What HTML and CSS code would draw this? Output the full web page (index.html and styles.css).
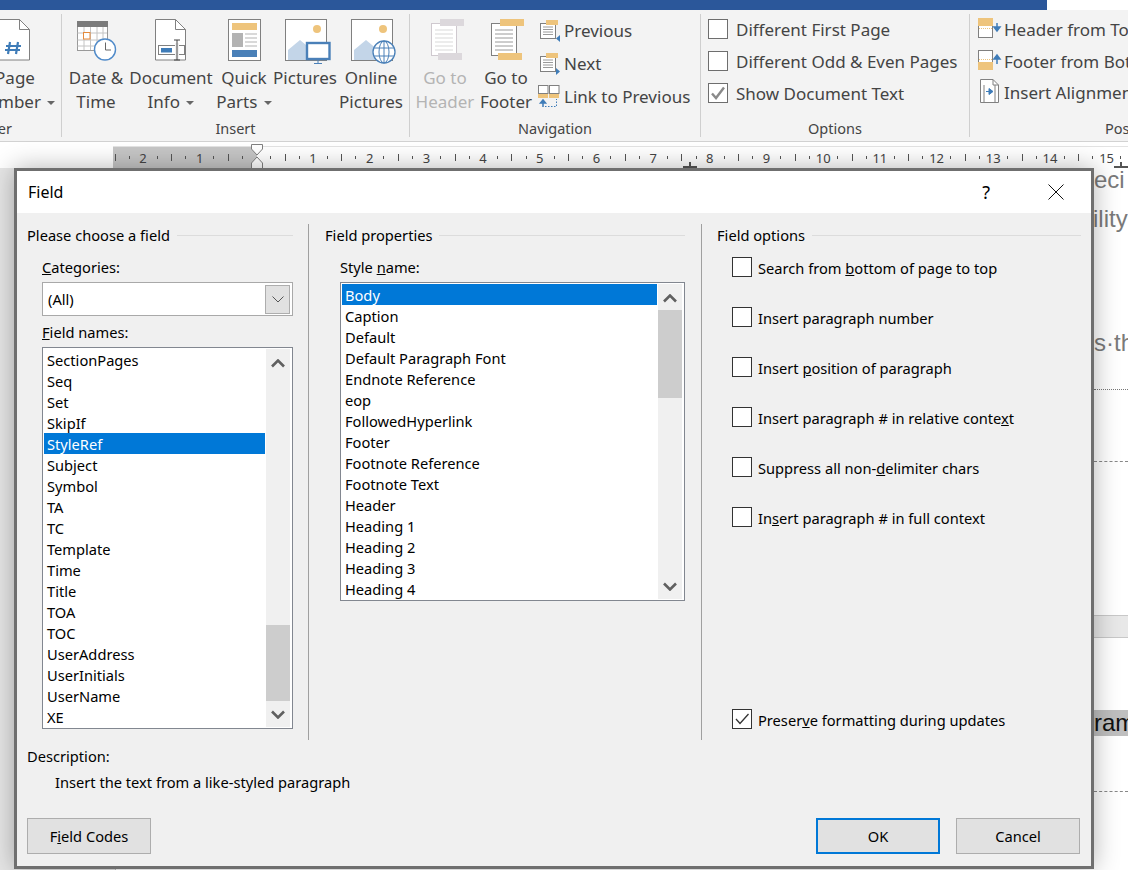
FILE: index.html
```html
<!DOCTYPE html>
<html lang="en">

<head>
    <meta charset="UTF-8">
    <meta name="viewport" content="width=device-width, initial-scale=1.0">
    <title>Field</title>
    <link rel="stylesheet" href="styles.css">
</head>

<body>
    <div class="titlebar"></div>

    <div class="ribbon">
        <div class="group group-first">
            <div class="group-body">
                <div class="big-btn btn-page">
                    <svg width="32" height="42" viewBox="0 0 32 42"><path d="M.5.5H20.5L30.5 10.5V41H.5Z" fill="#fff" stroke="#808080"/><path d="M20.5.5V10.5H30.5" fill="none" stroke="#808080"/><path d="M11 23 9 35M19 23 17 35M7 27H22M6 31H21" stroke="#3f7cb8" stroke-width="2.2" fill="none"/></svg>
                    <span class="big-label">Page<br>Number <i class="caret"></i></span>
                </div>
            </div>
            <div class="group-label">Header &amp; Footer</div>
        </div>

        <div class="group group-insert">
            <div class="group-body">
                <div class="big-btn btn-date">
                    <svg width="40" height="42" viewBox="0 0 40 42"><rect x=".5" y="1.500" width="30" height="29" fill="#fff" stroke="#999"/><rect y="1" width="31" height="6" fill="#7b7b7b"/><path d="M.5 13H30M.5 20H30M.5 26H30M7 7V30M13.500 7V30M20 7V30M26 7V30" stroke="#c4c4c4" fill="none"/><rect x="6.500" y="12.500" width="6.500" height="6.500" fill="#fff" stroke="#e58a3c"/><circle cx="28" cy="29.500" r="10.500" fill="#fff" stroke="#4f8ac9" stroke-width="1.400"/><path d="M28.500 22.500V30H34" fill="none" stroke="#666"/></svg>
                    <span class="big-label">Date &amp;<br>Time</span>
                </div>
                <div class="big-btn btn-info">
                    <svg width="32" height="42" viewBox="0 0 32 42"><path d="M.5.5H20.500L30.500 10.500V41H.5Z" fill="#fff" stroke="#808080"/><path d="M20.500.5V10.500H30.500" fill="none" stroke="#808080"/><rect x="3.500" y="26.500" width="26" height="9" fill="#fff" stroke="#808080"/><rect x="6" y="29" width="11" height="4.500" fill="#3f7cb8"/><rect x="20" y="24" width="4" height="16" fill="#f2f2f2"/><path d="M19 21H25M22 21V41M19 41H25" fill="none" stroke="#444"/></svg>
                    <span class="big-label">Document<br>Info <i class="caret"></i></span>
                </div>
                <div class="big-btn btn-parts">
                    <svg width="33" height="42" viewBox="0 0 33 42"><rect x=".5" y=".5" width="32" height="41" fill="#fff" stroke="#808080"/><rect x="4" y="4" width="25" height="7" fill="#eec47c"/><rect x="4" y="14" width="11" height="14" fill="#b3b3b3"/><path d="M17 15H29M17 19H29M17 23H29M17 27H29" stroke="#b3b3b3"/><rect x="4" y="31" width="25" height="7" fill="#4a80b8"/></svg>
                    <span class="big-label">Quick<br>Parts <i class="caret"></i></span>
                </div>
                <div class="big-btn btn-pics">
                    <svg width="46" height="46" viewBox="0 0 46 46"><rect x=".5" y=".5" width="41" height="41" fill="#fff" stroke="#808080"/><circle cx="32" cy="10" r="4" fill="#eec47c"/><path d="M3 41V31L15 21 27 31V41Z" fill="#c3d5e8"/><rect x="22" y="24" width="22.500" height="16" fill="#fff" stroke="#4a80b8" stroke-width="2.400"/><path d="M33 41V44M29 44.500H37" stroke="#4a80b8"/></svg>
                    <span class="big-label">Pictures</span>
                </div>
                <div class="big-btn btn-online">
                    <svg width="46" height="46" viewBox="0 0 46 46"><rect x=".5" y=".5" width="41" height="41" fill="#fff" stroke="#808080"/><circle cx="32" cy="10" r="4" fill="#eec47c"/><path d="M3 41V31L15 21 27 31V41Z" fill="#c3d5e8"/><circle cx="33" cy="33" r="11" fill="#fff" stroke="#4a80b8" stroke-width="1.300"/><ellipse cx="33" cy="33" rx="5" ry="11" fill="none" stroke="#4a80b8"/><path d="M33 22V44M23 29H43M23 37H43" stroke="#4a80b8"/></svg>
                    <span class="big-label">Online<br>Pictures</span>
                </div>
            </div>
            <div class="group-label">Insert</div>
        </div>

        <div class="group group-nav">
            <div class="group-body">
                <div class="big-btn btn-gohead disabled">
                    <svg width="34" height="42" viewBox="0 0 34 42"><rect x=".5" y="4.500" width="25" height="32" fill="#fff" stroke="#cfc9cf"/><rect x="9" y="0" width="24" height="7" fill="#dcd8dc"/><rect x="7" y="34" width="24" height="7" fill="#dcd8dc"/><path d="M4 11H22M4 15H22M4 19H22M4 23H22M4 27H22M4 31H22" stroke="#d9d9d9"/></svg>
                    <span class="big-label">Go to<br>Header</span>
                </div>
                <div class="big-btn btn-gofoot">
                    <svg width="34" height="42" viewBox="0 0 34 42"><rect x=".5" y="4.500" width="25" height="32" fill="#fff" stroke="#808080"/><rect x="9" y="0" width="24" height="7" fill="#eec47c"/><rect x="7" y="34" width="24" height="7" fill="#eec47c"/><rect x="4" y="8" width="18" height="24" fill="#fff"/><path d="M4 11H22M4 15H22M4 19H22M4 23H22M4 27H22M4 31H22" stroke="#9a9a9a"/></svg>
                    <span class="big-label">Go to<br>Footer</span>
                </div>
                <div class="small-col nav-col">
                    <div class="small-row">
                        <svg width="24" height="24" viewBox="0 0 24 24"><rect x="2.500" y="4.500" width="15" height="15" fill="#fff" stroke="#808080"/><rect x="8" y="1" width="12" height="5" fill="#eec47c"/><path d="M5 8H15M5 10.500H15M5 13H15M5 15.500H15" stroke="#9a9a9a"/><path d="M22 16V23L18 19.500Z" fill="#3f7cb8"/></svg>
                        <span>Previous</span>
                    </div>
                    <div class="small-row">
                        <svg width="24" height="24" viewBox="0 0 24 24"><rect x="2.500" y="4.500" width="15" height="15" fill="#fff" stroke="#808080"/><rect x="8" y="1" width="12" height="5" fill="#eec47c"/><path d="M5 8H15M5 10.500H15M5 13H15M5 15.500H15" stroke="#9a9a9a"/><path d="M18 16V23L22 19.500Z" fill="#3f7cb8"/></svg>
                        <span>Next</span>
                    </div>
                    <div class="small-row">
                        <svg width="24" height="24" viewBox="0 0 24 24"><rect x=".5" y=".5" width="9.500" height="8" fill="#fff" stroke="#808080"/><rect x="11.500" y=".5" width="9.500" height="8" fill="#fff" stroke="#808080"/><rect y="9" width="10" height="4" fill="#eec47c"/><rect x="11" y="9" width="10" height="4" fill="#eec47c"/><path d="M7 21.500H18.500V14" fill="none" stroke="#3f7cb8" stroke-dasharray="1.500 1.500"/><path d="M5 22V16M2.500 18 5 15 7.500 18Z" fill="#3f7cb8" stroke="#3f7cb8" stroke-width="1.500"/></svg>
                        <span>Link to Previous</span>
                    </div>
                </div>
            </div>
            <div class="group-label">Navigation</div>
        </div>

        <div class="group group-options">
            <div class="group-body">
                <div class="small-col opt-col">
                    <div class="small-row"><i class="rib-box"></i><span>Different First Page</span></div>
                    <div class="small-row"><i class="rib-box"></i><span>Different Odd &amp; Even Pages</span></div>
                    <div class="small-row">
                        <i class="rib-box"><svg width="18" height="18" viewBox="0 0 18 18"><path d="M3 9.500 7 14 15 3.500" fill="none" stroke="#8a8a8a" stroke-width="2.400"/></svg></i>
                        <span>Show Document Text</span>
                    </div>
                </div>
            </div>
            <div class="group-label">Options</div>
        </div>

        <div class="group group-pos">
            <div class="group-body">
                <div class="small-col pos-col">
                    <div class="small-row">
                        <svg width="24" height="24" viewBox="0 0 24 24"><rect x=".5" y="1.500" width="14" height="19" fill="#fff" stroke="#808080"/><rect y="1" width="15" height="8" fill="#eec47c"/><path d="M1 11.500H15" stroke="#eec47c" stroke-dasharray="1 1"/><path d="M19 6V12M16 10 19 14 22 10Z" fill="#3f7cb8" stroke="#3f7cb8" stroke-width="1.500"/></svg>
                        <span>Header from Top</span>
                    </div>
                    <div class="small-row">
                        <svg width="24" height="24" viewBox="0 0 24 24"><rect x=".5" y="1.500" width="14" height="19" fill="#fff" stroke="#808080"/><rect y="13" width="15" height="8" fill="#eec47c"/><path d="M1 10.500H15" stroke="#eec47c" stroke-dasharray="1 1"/><path d="M19 15V9M16 10 19 6 22 10Z" fill="#3f7cb8" stroke="#3f7cb8" stroke-width="1.500"/></svg>
                        <span>Footer from Bottom</span>
                    </div>
                    <div class="small-row">
                        <svg width="24" height="26" viewBox="0 0 24 26"><path d="M2.500.5H15L20.500 6V23.500H2.500Z" fill="#fff" stroke="#808080"/><path d="M15 .5V6H20.500M6 6V23M17 6V23" fill="none" stroke="#808080"/><path d="M8 12.500H13M11 9.500 15 12.500 11 15.500Z" fill="#3f7cb8" stroke="#3f7cb8"/></svg>
                        <span>Insert Alignment Tab</span>
                    </div>
                </div>
            </div>
            <div class="group-label label-pos">Position</div>
        </div>
    </div>

    <div class="ruler-strip">
        <div class="ruler">
            <div class="ruler-cell">2</div>
            <div class="ruler-cell">1</div>
            <div class="ruler-cell ruler-zero"></div>
            <div class="ruler-cell">1</div>
            <div class="ruler-cell">2</div>
            <div class="ruler-cell">3</div>
            <div class="ruler-cell">4</div>
            <div class="ruler-cell">5</div>
            <div class="ruler-cell">6</div>
            <div class="ruler-cell">7</div>
            <div class="ruler-cell">8</div>
            <div class="ruler-cell">9</div>
            <div class="ruler-cell">10</div>
            <div class="ruler-cell">11</div>
            <div class="ruler-cell">12</div>
            <div class="ruler-cell">13</div>
            <div class="ruler-cell">14</div>
            <div class="ruler-cell">15</div>
        </div>
        <svg class="indent-mark" width="14" height="26" viewBox="0 0 14 26"><path d="M1.500.5H12.500V5L7 11 1.500 5ZM7 13 12.500 19V25.500H1.500V19Z" fill="#fff" stroke="#808080"/></svg>
        <i class="tab-mark tab-a"></i>
        <i class="tab-mark tab-b"></i>
    </div>

    <div class="workspace">
        <div class="doc-margin"></div>
        <div class="doc-page">
            <div class="doc-line line-1">eci</div>
            <div class="doc-line line-2">ility</div>
            <div class="doc-line line-3">s·tha</div>
            <div class="rule rule-dotted"></div>
            <div class="rule rule-dashed"></div>
            <div class="doc-band"></div>
            <div class="doc-line line-4"><span class="hl">ram</span></div>
            <div class="rule rule-dashed rule-last"></div>
        </div>
    </div>

    <div class="dialog">
        <div class="dialog-title">
            <span class="dialog-name">Field</span>
            <span class="dialog-help">?</span>
            <svg class="dialog-close" width="16" height="16" viewBox="0 0 16 16"><path d="M.5.5 15.500 15.500M15.500.5 .5 15.500" stroke="#111" fill="none"/></svg>
        </div>

        <div class="dialog-body">
            <div class="columns">
                <section class="col col-choose">
                    <h2 class="col-head"><span>Please choose a field</span></h2>
                    <div class="col-inner">
                        <label class="field-label label-cat"><u>C</u>ategories:</label>
                        <div class="combo">
                            <span>(All)</span>
                            <div class="combo-btn"><svg width="12" height="7" viewBox="0 0 12 7"><path d="M.5.5 6 6 11.500.5" fill="none" stroke="#555"/></svg></div>
                        </div>
                        <label class="field-label label-names"><u>F</u>ield names:</label>
                        <div class="listbox list-names">
                            <ul class="rows">
                                <li>SectionPages</li>
                                <li>Seq</li>
                                <li>Set</li>
                                <li>SkipIf</li>
                                <li class="selected">StyleRef</li>
                                <li>Subject</li>
                                <li>Symbol</li>
                                <li>TA</li>
                                <li>TC</li>
                                <li>Template</li>
                                <li>Time</li>
                                <li>Title</li>
                                <li>TOA</li>
                                <li>TOC</li>
                                <li>UserAddress</li>
                                <li>UserInitials</li>
                                <li>UserName</li>
                                <li>XE</li>
                            </ul>
                            <div class="scrollbar">
                                <div class="arrow arrow-up"><svg width="14" height="9" viewBox="0 0 14 9"><path d="M1 7.500 7 1.500 13 7.500" fill="none" stroke="#606060" stroke-width="2.600"/></svg></div>
                                <div class="track track-names"><div class="thumb"></div></div>
                                <div class="arrow"><svg width="14" height="9" viewBox="0 0 14 9"><path d="M1 1.500 7 7.500 13 1.500" fill="none" stroke="#606060" stroke-width="2.600"/></svg></div>
                            </div>
                        </div>
                    </div>
                </section>

                <section class="col col-props">
                    <h2 class="col-head"><span>Field properties</span></h2>
                    <div class="col-inner">
                        <label class="field-label label-cat">Style <u>n</u>ame:</label>
                        <div class="listbox list-styles">
                            <ul class="rows">
                                <li class="selected">Body</li>
                                <li>Caption</li>
                                <li>Default</li>
                                <li>Default Paragraph Font</li>
                                <li>Endnote Reference</li>
                                <li>eop</li>
                                <li>FollowedHyperlink</li>
                                <li>Footer</li>
                                <li>Footnote Reference</li>
                                <li>Footnote Text</li>
                                <li>Header</li>
                                <li>Heading 1</li>
                                <li>Heading 2</li>
                                <li>Heading 3</li>
                                <li>Heading 4</li>
                            </ul>
                            <div class="scrollbar">
                                <div class="arrow arrow-up"><svg width="14" height="9" viewBox="0 0 14 9"><path d="M1 7.500 7 1.500 13 7.500" fill="none" stroke="#606060" stroke-width="2.600"/></svg></div>
                                <div class="track track-styles"><div class="thumb"></div></div>
                                <div class="arrow"><svg width="14" height="9" viewBox="0 0 14 9"><path d="M1 1.500 7 7.500 13 1.500" fill="none" stroke="#606060" stroke-width="2.600"/></svg></div>
                            </div>
                        </div>
                    </div>
                </section>

                <section class="col col-options">
                    <h2 class="col-head"><span>Field options</span></h2>
                    <div class="check-list">
                        <div class="check-row"><i class="box"></i><span>Search from <u>b</u>ottom of page to top</span></div>
                        <div class="check-row"><i class="box"></i><span>Insert paragraph number</span></div>
                        <div class="check-row"><i class="box"></i><span>Insert <u>p</u>osition of paragraph</span></div>
                        <div class="check-row"><i class="box"></i><span>Insert paragraph # in relative conte<u>x</u>t</span></div>
                        <div class="check-row"><i class="box"></i><span>Suppress all non-<u>d</u>elimiter chars</span></div>
                        <div class="check-row"><i class="box"></i><span>In<u>s</u>ert paragraph # in full context</span></div>
                    </div>
                    <div class="check-row check-last">
                        <i class="box"><svg width="18" height="18" viewBox="0 0 18 18"><path d="M3 9 7 13.500 15.500 4" fill="none" stroke="#333" stroke-width="1.300"/></svg></i>
                        <span>Preser<u>v</u>e formatting during updates</span>
                    </div>
                </section>
            </div>

            <div class="description">
                <div>Description:</div>
                <div class="desc-text">Insert the text from a like-styled paragraph</div>
            </div>

            <div class="actions">
                <div class="btn">F<u>i</u>eld Codes</div>
                <div class="btn-right">
                    <div class="btn btn-default">OK</div>
                    <div class="btn">Cancel</div>
                </div>
            </div>
        </div>
    </div>
</body>

</html>
```

FILE: styles.css
```css
html, body {
    margin: 0;
    height: 870px;
    overflow: hidden;
}

body {
    position: relative;
    background: #fff;
    font-family: "Noto Sans", "Open Sans", sans-serif;
    color: #000;
}

/* ribbon */
.titlebar {
    width: 1047px;
    height: 10px;
    background: #2b579a;
}

.ribbon {
    display: flex;
    height: 132px;
    padding-top: 4px;
    box-sizing: border-box;
    background: #f3f3f3;
    border-bottom: 1px solid #d2d2d2;
    color: #444;
}

.group {
    display: flex;
    flex-direction: column;
    flex: none;
    height: 123px;
    box-sizing: border-box;
    border-right: 1px solid #cfcfcf;
    overflow-x: clip;
}

.group-first { width: 62px; }
.group-insert { width: 348px; }
.group-nav { width: 291px; }
.group-options { width: 269px; }
.group-pos { flex: 1; border-right: 0; }

.group-body {
    display: flex;
    flex: none;
    height: 104px;
}

.group-first .group-body { justify-content: flex-end; }

.group-label {
    flex: none;
    font-size: 14.5px;
    line-height: 20px;
    text-align: center;
    white-space: nowrap;
}

.group-first .group-label {
    display: flex;
    justify-content: flex-end;
    padding-right: 49px;
}

.label-pos {
    text-align: left;
    padding-left: 135px;
}

.big-btn {
    display: grid;
    flex: none;
    grid-template-columns: minmax(0, 1fr);
    grid-template-rows: 47px auto;
    justify-items: center;
    align-content: start;
    padding-top: 5px;
    box-sizing: border-box;
}

.big-btn svg { display: block; }

.big-label {
    display: block;
    font-size: 17px;
    line-height: 24px;
    text-align: center;
    white-space: nowrap;
}

.caret {
    display: inline-block;
    width: 0;
    height: 0;
    margin-left: 2px;
    vertical-align: 3px;
    border-top: 4px solid #666;
    border-left: 4px solid transparent;
    border-right: 4px solid transparent;
}

.btn-page { width: 92px; }
.btn-date { width: 68px; }
.btn-date svg { margin: 1px 0 0 2px; }
.btn-info { width: 82px; }
.btn-parts { width: 64px; }
.btn-pics { width: 58px; }
.btn-pics svg { margin-left: 6px; }
.btn-online { width: 74px; }
.btn-online svg { margin-left: 6px; }
.btn-gohead { width: 68px; margin-left: 1px; }
.btn-gohead svg { margin-left: 6px; }
.btn-gofoot { width: 54px; }
.btn-gofoot svg { margin-left: 4px; }

.disabled { color: #b4b4b4; }

.small-col {
    display: flex;
    flex-direction: column;
}

.nav-col { margin-left: 5px; }
.nav-col .small-row { height: 33px; }
.opt-col { margin: -1px 0 0 7px; }
.pos-col { margin: -1px 0 0 8px; }
.pos-col .small-row:last-child { margin-top: -1px; }

.small-row {
    display: flex;
    align-items: center;
    height: 32px;
    font-size: 17px;
    white-space: nowrap;
}

.small-row svg { flex: none; }
.small-row > svg { margin-right: 2px; }

.rib-box {
    display: flex;
    flex: none;
    align-items: center;
    justify-content: center;
    width: 18px;
    height: 18px;
    margin-right: 8px;
    background: #fff;
    border: 1px solid #6e6e6e;
}

.group-options .rib-box svg { display: block; }

/* ruler */
.ruler-strip {
    position: relative;
    height: 26px;
    padding: 4px 0 0 113px;
    box-sizing: border-box;
    background: #fff;
    overflow: hidden;
}

.ruler {
    display: flex;
    height: 22px;
    padding-left: 1.6px;
    background: linear-gradient(to right, #c6c6c6 144px, #fff 144px);
    border-top: 1px solid #e3e3e3;
    box-sizing: border-box;
}

.ruler-cell {
    flex: none;
    width: 56.7px;
    font-size: 13px;
    line-height: 22px;
    text-align: center;
    color: #444;
    background:
        linear-gradient(#555, #555) 14.1px 9px / 1px 3px no-repeat,
        linear-gradient(#555, #555) 42.1px 9px / 1px 3px no-repeat,
        linear-gradient(#555, #555) 0 7px / 1px 7px no-repeat;
}

.indent-mark {
    position: absolute;
    left: 250px;
    top: 2px;
}

.tab-mark {
    position: absolute;
    top: 20px;
    width: 2px;
    height: 6px;
    background: #555;
}

.tab-mark::after {
    content: "";
    position: absolute;
    left: -6px;
    bottom: 0;
    width: 14px;
    height: 2px;
    background: #555;
}

.tab-a { left: 689px; }
.tab-b { left: 1120px; }

/* document behind the dialog */
.workspace {
    display: flex;
    height: 702px;
}

.doc-margin {
    flex: none;
    width: 115px;
    background: #e6e6e6;
    border-right: 1px solid #bdbdbd;
}

.doc-page {
    flex: 1;
    position: relative;
    overflow: hidden;
    background: #fff;
    font-family: "Liberation Sans", sans-serif;
    color: #7a7a7a;
}

.doc-line {
    padding-left: 978px;
    font-size: 24px;
    line-height: 30px;
    white-space: nowrap;
}

.line-1 { margin-top: -3px; }
.line-2 { margin-top: 9px; margin-left: -1px; }
.line-3 { margin-top: 94px; }

.line-4 {
    margin-top: 70px;
    color: #111;
}

.hl {
    display: inline-block;
    padding-right: 20px;
    background: #bfbfbf;
    line-height: 26px;
}

.rule { margin-left: 978px; }

.rule-dotted {
    margin-top: 31px;
    border-top: 1px dotted #777;
}

.rule-dashed {
    margin-top: 71px;
    border-top: 1px dashed #888;
}

.rule-last { margin-top: 53px; }

.doc-band {
    height: 21px;
    margin: 153px 0 0 978px;
    background: #e8e8e8;
    border-top: 1px solid #c8c8c8;
    border-bottom: 1px solid #c8c8c8;
}

/* dialog */
.dialog {
    position: absolute;
    left: 14px;
    top: 168px;
    display: flex;
    flex-direction: column;
    width: 1080px;
    height: 701px;
    box-sizing: border-box;
    background: #f0f0f0;
    border: 3px solid #6f6f6f;
    box-shadow: 0 0 24px rgba(0, 0, 0, .3);
    font-size: 14.65px;
}

.dialog-title {
    display: flex;
    flex: none;
    align-items: center;
    height: 42px;
    padding: 0 27px 0 11px;
    background: #fff;
    font-size: 16px;
}

.dialog-name { flex: 1; }

.dialog-help {
    margin-right: 58px;
    font-size: 18px;
}

.dialog-body {
    display: flex;
    flex: 1;
    flex-direction: column;
    padding: 11px 10px 12px;
}

.columns {
    display: flex;
    height: 516px;
}

.col {
    flex: none;
    box-sizing: border-box;
}

.col-choose {
    width: 282px;
    padding-right: 15px;
    border-right: 1px solid #a0a0a0;
}

.col-props {
    width: 393px;
    padding: 0 16px 0 16px;
    border-right: 1px solid #a0a0a0;
}

.col-options {
    flex: 1;
    position: relative;
    padding-left: 15px;
}

.col-head {
    display: flex;
    align-items: center;
    gap: 7px;
    height: 20px;
    margin: 1px 0 0;
    font-size: 14.65px;
    font-weight: normal;
    white-space: nowrap;
}

.col-head::after {
    content: "";
    flex: 1;
    height: 1px;
    background: #dcdcdc;
}

.col-inner { padding-left: 15px; }

.field-label {
    display: block;
    height: 20px;
    line-height: 20px;
}

.label-cat { margin-top: 12px; }
.label-names { margin-top: 6px; }

.combo {
    display: flex;
    align-items: center;
    justify-content: space-between;
    height: 34px;
    margin-top: 5px;
    padding: 0 2px 0 5px;
    box-sizing: border-box;
    background: #fff;
    border: 1px solid #a9a9a9;
}

.combo-btn {
    display: flex;
    align-items: center;
    justify-content: center;
    width: 25px;
    height: 29px;
    background: #e1e1e1;
    border: 1px solid #adadad;
    box-sizing: border-box;
}

.listbox {
    display: flex;
    box-sizing: border-box;
    margin-top: 5px;
    padding: 1px 2px 1px 1px;
    background: #fff;
    border: 1px solid #828790;
}

.list-names { height: 382px; }
.list-styles { height: 319px; }

.rows {
    flex: 1;
    margin: 0;
    padding: 0;
    list-style: none;
}

.rows li {
    height: 21px;
    padding-left: 3px;
    line-height: 23px;
    white-space: nowrap;
}

.rows .selected {
    background: #0078d7;
    color: #fff;
}

.scrollbar {
    display: flex;
    flex: none;
    flex-direction: column;
    width: 24px;
    margin-left: 1px;
    background: #f0f0f0;
}

.arrow {
    display: flex;
    flex: none;
    align-items: center;
    justify-content: center;
    height: 26px;
    box-sizing: border-box;
}

.arrow-up { padding-top: 3px; }

.track {
    flex: 1;
    display: flex;
    flex-direction: column;
}

.thumb { background: #cdcdcd; }
.track-names { justify-content: flex-end; }
.track-names .thumb { height: 76px; }
.track-styles .thumb { height: 88px; }

.check-list { padding-top: 12px; }

.check-row {
    display: flex;
    align-items: center;
    height: 20px;
    margin: 0 0 30px 15px;
    white-space: nowrap;
}

.check-row span { padding-top: 1px; }

.check-last {
    position: absolute;
    left: 15px;
    bottom: 11px;
    margin-bottom: 0;
}

.box {
    display: flex;
    flex: none;
    align-items: center;
    justify-content: center;
    width: 18px;
    height: 18px;
    margin-right: 6px;
    background: #fff;
    border: 1px solid #333;
}

.box svg { display: block; }

.description {
    margin-top: 6px;
    line-height: 20px;
}

.desc-text {
    margin-top: 6px;
    padding-left: 28px;
}

.actions {
    display: flex;
    justify-content: space-between;
    margin-top: auto;
}

.btn-right {
    display: flex;
    gap: 16px;
    margin-right: 1px;
}

.btn {
    width: 124px;
    height: 36px;
    box-sizing: border-box;
    background: #e1e1e1;
    border: 1px solid #adadad;
    line-height: 34px;
    text-align: center;
}

.btn-default {
    border: 2px solid #0078d7;
    line-height: 32px;
}
```
